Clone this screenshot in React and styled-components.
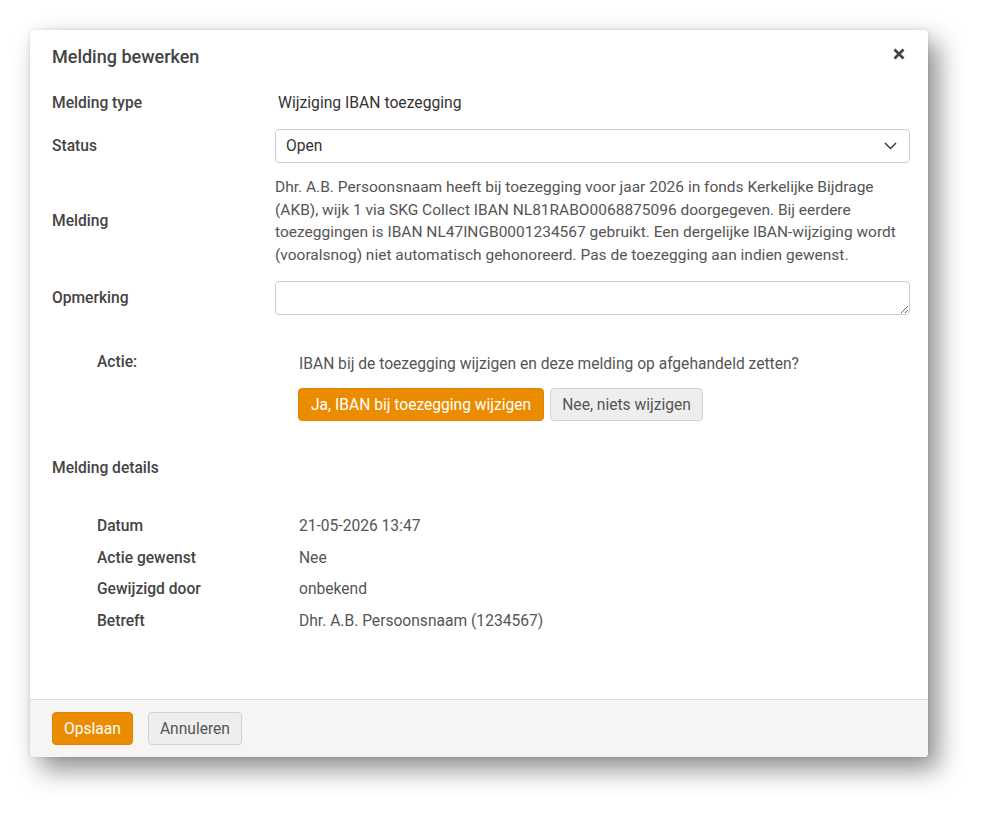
import React from "react";
import styled, { createGlobalStyle } from "styled-components";

const GlobalStyle = createGlobalStyle`
  html, body {
    margin: 0;
    padding: 0;
    background: #fff;
    font-family: Roboto, "Liberation Sans", Arial, sans-serif;
  }
  * { box-sizing: border-box; }
`;

const Page = styled.div`
  padding: 30px 60px 60px 30px;
`;

const Modal = styled.div`
  width: 898px;
  height: 727px;
  background: #fff;
  border-radius: 4px;
  box-shadow: 10px 12px 26px rgba(0, 0, 0, 0.45), 0 0 4px rgba(0, 0, 0, 0.12);
  display: flex;
  flex-direction: column;
  overflow: hidden;
`;

const Header = styled.div`
  display: flex;
  align-items: center;
  justify-content: space-between;
  padding: 16px 22px 0 22px;
  box-sizing: content-box;
  height: 22px;
`;

const Title = styled.h3`
  margin: 0;
  font-size: 18px;
  line-height: 22px;
  font-weight: 500;
  color: #444;
`;

const CloseButton = styled.button`
  border: 0;
  background: none;
  padding: 0;
  width: 14px;
  height: 14px;
  display: flex;
  align-items: center;
  justify-content: center;
  cursor: pointer;
  margin-top: -6px;
`;

const Body = styled.div`
  flex: 1;
  padding: 20px 18px 0 22px;
`;

const Field = styled.div`
  display: flex;
  align-items: center;
  margin-bottom: ${(p) => p.$mb ?? 12}px;
  min-height: ${(p) => p.$h || 0}px;
`;

const Label = styled.div`
  width: 223px;
  flex-shrink: 0;
  font-size: 15.6px;
  font-weight: 500;
  color: #444;
`;

const Value = styled.div`
  flex: 1;
  font-size: 15.5px;
  line-height: 22.5px;
  color: #555;
  padding-left: ${(p) => p.$pl || 0}px;
`;

const TypeValue = styled(Value)`
  color: #333;
  font-size: 15.7px;
`;

const Select = styled.div`
  flex: 1;
  height: 34px;
  border: 1px solid #ccc;
  border-radius: 4px;
  display: flex;
  align-items: center;
  justify-content: space-between;
  padding: 0 12px 0 10px;
  font-size: 15.6px;
  color: #333;
`;

const TextArea = styled.textarea`
  flex: 1;
  height: 34px;
  border: 1px solid #ccc;
  border-radius: 4px;
  resize: vertical;
  font-family: inherit;
  font-size: 15px;
  padding: 6px 10px;
  outline: none;
`;

const ActionBlock = styled.div`
  display: flex;
  padding: 36px 0 0 45px;
`;

const SubLabel = styled.div`
  width: 202px;
  flex-shrink: 0;
  font-size: 15.6px;
  font-weight: 500;
  color: #444;
  line-height: 20px;
  padding-top: 1px;
`;

const ActionContent = styled.div`
  display: flex;
  flex-direction: column;
  gap: 14px;
  font-size: 15.6px;
  color: #555;
  line-height: 20px;
  padding-top: 3px;
`;

const ButtonRow = styled.div`
  display: flex;
  gap: 6px;
  margin-left: -1px;
`;

const Button = styled.button`
  height: 33px;
  padding: 0 ${(p) => p.$px ?? 12}px;
  border-radius: 4px;
  font-family: inherit;
  font-size: 15.6px;
  cursor: pointer;
  border: 1px solid ${(p) => (p.$primary ? "#e08500" : "#d2d2d2")};
  background: ${(p) => (p.$primary ? "#eb8c00" : "#eeeeee")};
  color: ${(p) => (p.$primary ? "#fff" : "#555")};
`;

const SectionTitle = styled.div`
  margin-top: 36px;
  font-size: 15.6px;
  font-weight: 500;
  color: #444;
  line-height: 22px;
`;

const Details = styled.div`
  display: grid;
  grid-template-columns: 202px 1fr;
  grid-auto-rows: 31.7px;
  align-items: center;
  padding-left: 45px;
  margin-top: 31px;
`;

const DetailLabel = styled.div`
  font-size: 15.6px;
  font-weight: 500;
  color: #444;
`;

const DetailValue = styled.div`
  font-size: 15.6px;
  color: #555;
`;

const Footer = styled.div`
  height: 58px;
  border-top: 1px solid #ddd;
  background: #f6f5f4;
  display: flex;
  align-items: center;
  gap: 15px;
  padding: 0 22px;
`;

const details = [
  ["Datum", "21-05-2026 13:47"],
  ["Actie gewenst", "Nee"],
  ["Gewijzigd door", "onbekend"],
  ["Betreft", "Dhr. A.B. Persoonsnaam (1234567)"],
];

const App = () => {
  return (
    <Page>
      <GlobalStyle />
      <Modal>
        <Header>
          <Title>Melding bewerken</Title>
          <CloseButton aria-label="Sluiten">
            <svg width="12" height="12" viewBox="0 0 12 12">
              <path
                d="M1.5 1.5 L10.5 10.5 M10.5 1.5 L1.5 10.5"
                stroke="#444"
                strokeWidth="2.8"
                strokeLinecap="butt"
              />
            </svg>
          </CloseButton>
        </Header>
        <Body>
          <Field $h={30} $mb={11}>
            <Label>Melding type</Label>
            <TypeValue $pl={3}>Wijziging IBAN toezegging</TypeValue>
          </Field>
          <Field $mb={13}>
            <Label>Status</Label>
            <Select>
              <span>Open</span>
              <svg width="13" height="8" viewBox="0 0 13 8">
                <path d="M1 1 L6.5 6.5 L12 1" fill="none" stroke="#333" strokeWidth="1.4" />
              </svg>
            </Select>
          </Field>
          <Field $mb={15}>
            <Label>Melding</Label>
            <Value>
              Dhr. A.B. Persoonsnaam heeft bij toezegging voor jaar 2026 in fonds Kerkelijke Bijdrage
              (AKB), wijk 1 via SKG Collect IBAN NL81RABO0068875096 doorgegeven. Bij eerdere
              toezeggingen is IBAN NL47INGB0001234567 gebruikt. Een dergelijke IBAN-wijziging wordt
              (vooralsnog) niet automatisch gehonoreerd. Pas de toezegging aan indien gewenst.
            </Value>
          </Field>
          <Field $mb={0}>
            <Label>Opmerking</Label>
            <TextArea />
          </Field>

          <ActionBlock>
            <SubLabel>Actie:</SubLabel>
            <ActionContent>
              <div>IBAN bij de toezegging wijzigen en deze melding op afgehandeld zetten?</div>
              <ButtonRow>
                <Button $primary $px={12}>Ja, IBAN bij toezegging wijzigen</Button>
                <Button $px={11}>Nee, niets wijzigen</Button>
              </ButtonRow>
            </ActionContent>
          </ActionBlock>

          <SectionTitle>Melding details</SectionTitle>
          <Details>
            {details.map(([label, value]) => (
              <React.Fragment key={label}>
                <DetailLabel>{label}</DetailLabel>
                <DetailValue>{value}</DetailValue>
              </React.Fragment>
            ))}
          </Details>
        </Body>
        <Footer>
          <Button $primary $px={11}>Opslaan</Button>
          <Button $px={11}>Annuleren</Button>
        </Footer>
      </Modal>
    </Page>
  );
};

export default App;
